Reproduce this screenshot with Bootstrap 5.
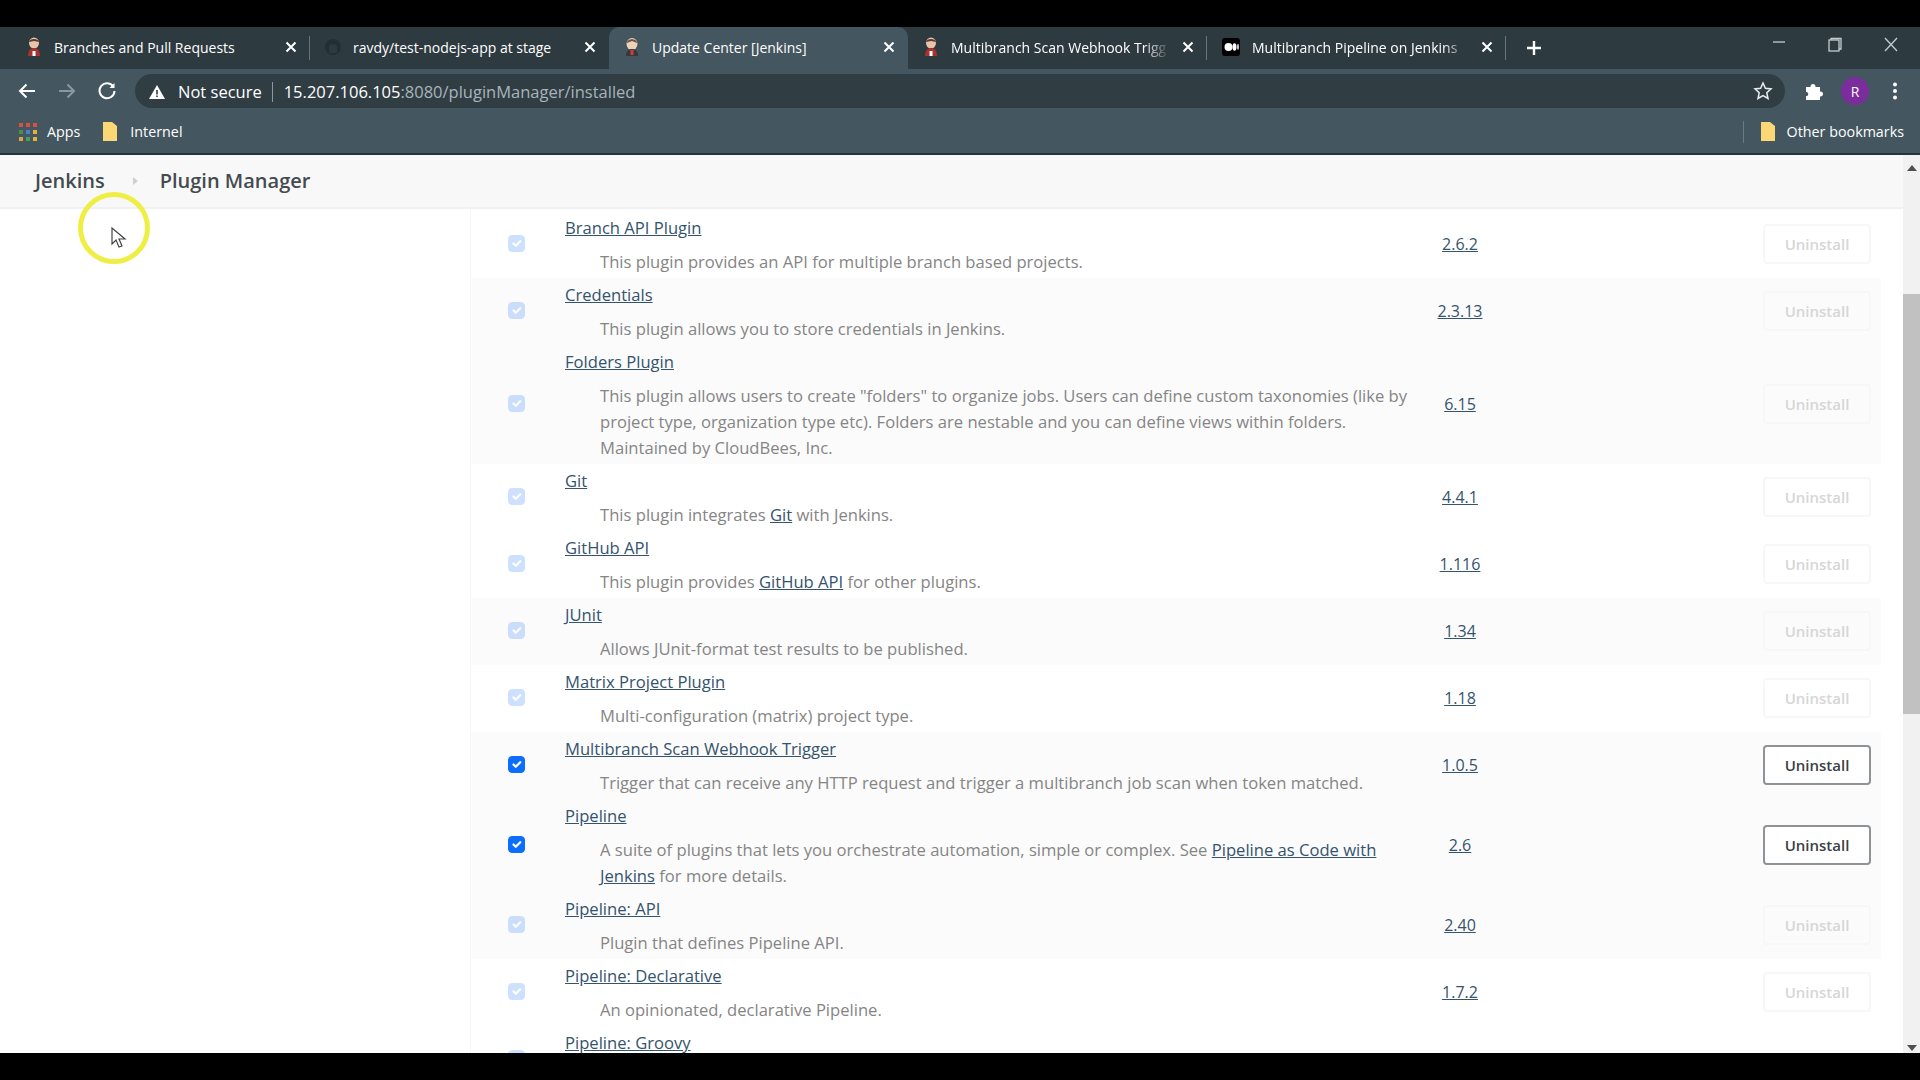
<!DOCTYPE html>
<html lang="en">
<head>
<meta charset="UTF-8">
<title>Update Center [Jenkins]</title>
<link href="https://cdn.jsdelivr.net/npm/bootstrap@5.3.0/dist/css/bootstrap.min.css" rel="stylesheet">
<style>
html, body { height: 100%; overflow: hidden; }
body { background: #000; font-family: "Open Sans", "Liberation Sans", sans-serif; }
.screen { height: 1080px; padding: 27px 0; }

.tabstrip { height: 42px; background: #2d3a40; padding-left: 11px; color: #fff; font-size: 14px; }
.tabitem { width: 299px; height: 42px; padding: 0 13px 2px 15px; position: relative; gap: 12px; white-space: nowrap; }
.tabitem.active-tab { background: #44565f; border-radius: 10px 10px 0 0; }
.tabitem.sep::after { content: ""; position: absolute; right: 0; top: 9px; bottom: 9px; width: 1px; background: #66757c; }
.tabtitle { flex: 1; overflow: hidden; }
.tabtitle.fade-end { -webkit-mask-image: linear-gradient(90deg, #000 88%, transparent); mask-image: linear-gradient(90deg, #000 88%, transparent); }
.tabx { width: 12px; height: 12px; flex: none; }
.newtab { margin-left: 20px; }
.winctl { margin-left: auto; gap: 40px; padding-right: 21px; align-self: flex-start; padding-top: 10px; }

.toolbar { height: 39px; background: #44565f; padding-left: 17px; color: #fff; }
.navico { width: 20px; height: 20px; margin: 12px 20px 0 0; flex: none; }
.omnibox { width: 1650px; height: 34px; margin: 5px 0 0 -2px; border-radius: 17px; background: #303e44; padding: 2px 0 0 14px; font-size: 16.5px; white-space: nowrap; }
.omnibox .urlsep { width: 1px; height: 20px; background: #8c989d; margin: 0 11px 0 10px; }
.notsecure { margin-left: 5px; }
.urldim { color: #a9b3b8; }
.staricon { margin: -2px 12px 0 auto; }
.puzzle { margin: 12px 0 0 19px; }
.avatar-r { width: 28px; height: 28px; margin: 8px 0 0 17px; background: #7b2d9c; font-size: 14px; }
.dotsicon { margin: 12px 0 0 23px; }

.bookmarks { height: 47px; background: #44565f; padding: 2px 0 0 19px; color: #fff; font-size: 14.3px; border-bottom: 2px solid #26343a; }
.bmapps { margin-left: 10px; }
.bmfolder { margin-left: 22px; }
.bmsep { width: 1px; height: 22px; background: #687a83; margin-left: auto; }
.bmfolder-right { margin: 0 13px 0 16px; }
.bmother { margin-left: -2px; padding-right: 16px; }

.pagewrap { height: 898px; background: #fff; }
.pagemain { width: 1903px; }
.crumbbar { height: 54px; background: #f8f8f8; padding-left: 35px; font-size: 20px; font-weight: 600; color: #444b50; border-bottom: 2px solid #f1f1f1; }
.crumbarrow { width: 0; height: 0; border-left: 5px solid #cfcfcf; border-top: 4px solid transparent; border-bottom: 4px solid transparent; margin: 0 22px 0 28px; }
.sidepane { width: 470px; flex: none; }
.plugins { width: 1411px; height: 844px; overflow: hidden; padding-top: 2px; border-left: 1px solid #f6f6f6; }
.plugrow { padding-bottom: 3px; }
.plugrow.shade { background: #fbfbfb; }
.chkcell { width: 94px; flex: none; padding-left: 37px; }
.chkcell .form-check-input { margin: 0; width: 17px; height: 17px; opacity: 1; }
.chkcell .form-check-input:disabled { opacity: .2; }
.maincell { width: 850px; flex: none; padding-top: 4px; font-size: 16.6px; line-height: 26px; }
.maincell a, .vercell a { color: #34536d; }
.plugdesc { margin: 8px 0 0 35px; color: #858585; }
.vercell { width: 90px; flex: none; text-align: center; font-size: 16px; padding-top: 2px; }
.actcell { flex: 1; text-align: right; padding: 2px 10px 0 0; }
.uninstall-btn { width: 108px; height: 40px; padding: 0; font-size: 15px; font-weight: 600; color: #3a4045; border: 2px solid #8f9396; border-radius: 4px; background: #fff; }
.uninstall-btn:disabled { color: #d6d6d6; border-color: #f7f7f7; background: transparent; opacity: 1; }
.plugrow.lastrow { min-height: 67px; }

.fakebar { width: 17px; background: #f1f1f1; }
.fakethumb { height: 420px; background: #c1c1c1; margin-top: 117px; }
.arrowup, .arrowdown { width: 0; height: 0; border-left: 5px solid transparent; border-right: 5px solid transparent; }
.arrowup { border-bottom: 6px solid #505050; margin: 10px auto 6px; }
.arrowdown { border-top: 6px solid #505050; margin: auto auto 2px; }

.cursor-ring { position: absolute; left: 78px; top: 192px; width: 72px; height: 72px; border: 5px solid #eeee44; border-radius: 50%; }
.cursor-ptr { position: absolute; left: 111px; top: 227px; }
</style>
</head>
<body>
<div class="screen position-relative">

  <div class="tabstrip d-flex align-items-center">
    <div class="tabitem sep d-flex align-items-center">
      <svg width="16" height="20" viewBox="0 0 16 20"><ellipse cx="8" cy="6" rx="5" ry="5.5" fill="#e8c4a8"/><path d="M3 5C3 1 13 1 13 5L8 4Z" fill="#5b3a30"/><path d="M2 19c0-6 3-8 6-8s6 2 6 8Z" fill="#a8322e"/><rect x="6.500" y="14" width="3" height="5" fill="#fff"/></svg>
      <span class="tabtitle">Branches and Pull Requests</span>
      <svg class="tabx" viewBox="0 0 12 12"><path d="M1.500 1.500l9 9M10.500 1.500l-9 9" stroke="#fff" stroke-width="2"/></svg>
    </div>
    <div class="tabitem d-flex align-items-center">
      <svg width="16" height="16" viewBox="0 0 16 16"><circle cx="8" cy="8" r="8" fill="#242f34"/><path d="M4 14V8c0-2 1-3 4-3s4 1 4 3v6" fill="#2d3a40"/></svg>
      <span class="tabtitle">ravdy/test-nodejs-app at stage</span>
      <svg class="tabx" viewBox="0 0 12 12"><path d="M1.500 1.500l9 9M10.500 1.500l-9 9" stroke="#fff" stroke-width="2"/></svg>
    </div>
    <div class="tabitem active-tab d-flex align-items-center">
      <svg width="16" height="20" viewBox="0 0 16 20"><ellipse cx="8" cy="7" rx="5.500" ry="6" fill="#eed3b8"/><path d="M3 6C3 1 13 1 13 6L8 4Z" fill="#6b5548"/><path d="M2 19c0-5 3-7 6-7s6 2 6 7Z" fill="#37373c"/><rect x="6.500" y="13" width="3" height="5" fill="#c9423c"/></svg>
      <span class="tabtitle">Update Center [Jenkins]</span>
      <svg class="tabx" viewBox="0 0 12 12"><path d="M1.500 1.500l9 9M10.500 1.500l-9 9" stroke="#fff" stroke-width="2"/></svg>
    </div>
    <div class="tabitem sep d-flex align-items-center">
      <svg width="16" height="20" viewBox="0 0 16 20"><ellipse cx="8" cy="6" rx="5" ry="5.500" fill="#e8c4a8"/><path d="M3 5C3 1 13 1 13 5L8 4Z" fill="#5b3a30"/><path d="M2 19c0-6 3-8 6-8s6 2 6 8Z" fill="#a8322e"/><rect x="6.500" y="14" width="3" height="5" fill="#fff"/></svg>
      <span class="tabtitle fade-end">Multibranch Scan Webhook Trigg</span>
      <svg class="tabx" viewBox="0 0 12 12"><path d="M1.500 1.500l9 9M10.500 1.500l-9 9" stroke="#fff" stroke-width="2"/></svg>
    </div>
    <div class="tabitem sep d-flex align-items-center">
      <svg width="18" height="18" viewBox="0 0 18 18"><rect width="18" height="18" rx="3" fill="#000"/><circle cx="6.500" cy="9" r="4" fill="#fff"/><ellipse cx="12.500" cy="9" rx="2" ry="3.700" fill="#fff"/><ellipse cx="16" cy="9" rx=".8" ry="3.300" fill="#fff"/></svg>
      <span class="tabtitle fade-end">Multibranch Pipeline on Jenkins</span>
      <svg class="tabx" viewBox="0 0 12 12"><path d="M1.500 1.500l9 9M10.500 1.500l-9 9" stroke="#fff" stroke-width="2"/></svg>
    </div>
    <svg class="newtab" width="16" height="16" viewBox="0 0 16 16"><path d="M8 1v14M1 8h14" stroke="#fff" stroke-width="2.400"/></svg>
    <div class="winctl d-flex">
      <svg width="16" height="16" viewBox="0 0 16 16"><path d="M2 5h12" stroke="#c6cdd0" stroke-width="1.300"/></svg>
      <svg width="16" height="16" viewBox="0 0 16 16" fill="none" stroke="#c6cdd0" stroke-width="1.300"><rect x="2" y="3" width="10" height="11"/><path d="M4 3V1.500h10V12h-2"/></svg>
      <svg width="16" height="16" viewBox="0 0 16 16"><path d="M2 1l12 13M14 1L2 14" stroke="#c6cdd0" stroke-width="1.300"/></svg>
    </div>
  </div>

  <div class="toolbar d-flex align-items-start">
    <svg class="navico" viewBox="0 0 20 20" fill="none" stroke="#fff" stroke-width="2"><path d="M18 10H3M9.500 3.500L3 10l6.500 6.500"/></svg>
    <svg class="navico" viewBox="0 0 20 20" fill="none" stroke="#8b989e" stroke-width="2"><path d="M2 10h15M10.500 3.500L17 10l-6.500 6.500"/></svg>
    <svg class="navico" viewBox="0 0 20 20" fill="none" stroke="#fff" stroke-width="2"><path d="M16.500 6A7.500 7.500 0 1 0 17.500 10"/><path d="M17.500 2v5h-5" fill="#fff" stroke="none"/></svg>
    <div class="omnibox d-flex align-items-center">
      <svg width="16" height="14" viewBox="0 0 16 14" class="me-2"><path d="M8 0l8 14H0Z" fill="#fff"/><rect x="7.200" y="5" width="1.600" height="4.500" fill="#303e44"/><rect x="7.200" y="10.500" width="1.600" height="1.600" fill="#303e44"/></svg>
      <span class="notsecure">Not secure</span><span class="urlsep"></span>
      <span>15.207.106.105<span class="urldim">:8080/pluginManager/installed</span></span>
      <svg class="staricon" width="20" height="20" viewBox="0 0 20 20" fill="none" stroke="#e8ecee" stroke-width="1.500"><path d="M10 2l2.400 5.300 5.600.6-4.200 3.800 1.200 5.800L10 14.600 5 17.500l1.200-5.800L2 7.900l5.600-.6Z"/></svg>
    </div>
    <svg class="puzzle" width="20" height="20" viewBox="0 0 20 20"><path d="M2 6h4.500c-.5-4 5.500-4 5 0H16v4.500c4-.5 4 5.500 0 5V19H2v-4c3 .5 3-4.500 0-4Z" fill="#fff"/></svg>
    <div class="avatar-r d-flex align-items-center justify-content-center rounded-circle">R</div>
    <svg class="dotsicon" width="6" height="20" viewBox="0 0 6 20" fill="#fff"><circle cx="3" cy="3.500" r="2"/><circle cx="3" cy="10" r="2"/><circle cx="3" cy="16.500" r="2"/></svg>
  </div>

  <div class="bookmarks d-flex align-items-center">
    <svg width="18" height="18" viewBox="0 0 18 18">
      <rect width="4" height="4" fill="#d9503f"/><rect x="7" width="4" height="4" fill="#d9503f"/><rect x="14" width="4" height="4" fill="#d9503f"/>
      <rect y="7" width="4" height="4" fill="#4a8f4c"/><rect x="7" y="7" width="4" height="4" fill="#4a7fd0"/><rect x="14" y="7" width="4" height="4" fill="#e3b23c"/>
      <rect y="14" width="4" height="4" fill="#e3a23c"/><rect x="7" y="14" width="4" height="4" fill="#4a9f5c"/><rect x="14" y="14" width="4" height="4" fill="#e3b23c"/>
    </svg>
    <span class="bmapps">Apps</span>
    <svg class="bmfolder" width="16" height="19" viewBox="0 0 16 19"><path d="M1 0h9l5 4v15H1Z" fill="#fbd775"/></svg>
    <span class="ms-2 ps-1">Internel</span>
    <span class="bmsep"></span>
    <svg class="bmfolder-right" width="16" height="19" viewBox="0 0 16 19"><path d="M1 0h9l5 4v15H1Z" fill="#fbd775"/></svg>
    <span class="bmother">Other bookmarks</span>
  </div>

  <div class="pagewrap d-flex">
    <div class="pagemain">
      <div class="crumbbar d-flex align-items-center">
        <span>Jenkins</span><span class="crumbarrow"></span><span>Plugin Manager</span>
      </div>
      <div class="d-flex">
        <div class="sidepane"></div>
        <div class="plugins">

          <div class="plugrow d-flex">
            <div class="chkcell d-flex align-items-center"><input class="form-check-input" type="checkbox" checked disabled></div>
            <div class="maincell"><a href="#">Branch API Plugin</a><div class="plugdesc">This plugin provides an API for multiple branch based projects.</div></div>
            <div class="vercell d-flex align-items-center justify-content-center"><a href="#">2.6.2</a></div>
            <div class="actcell d-flex align-items-center justify-content-end"><button class="btn uninstall-btn" disabled>Uninstall</button></div>
          </div>

          <div class="plugrow shade d-flex">
            <div class="chkcell d-flex align-items-center"><input class="form-check-input" type="checkbox" checked disabled></div>
            <div class="maincell"><a href="#">Credentials</a><div class="plugdesc">This plugin allows you to store credentials in Jenkins.</div></div>
            <div class="vercell d-flex align-items-center justify-content-center"><a href="#">2.3.13</a></div>
            <div class="actcell d-flex align-items-center justify-content-end"><button class="btn uninstall-btn" disabled>Uninstall</button></div>
          </div>

          <div class="plugrow shade d-flex">
            <div class="chkcell d-flex align-items-center"><input class="form-check-input" type="checkbox" checked disabled></div>
            <div class="maincell"><a href="#">Folders Plugin</a><div class="plugdesc">This plugin allows users to create "folders" to organize jobs. Users can define custom taxonomies (like by project type, organization type etc). Folders are nestable and you can define views within folders. Maintained by CloudBees, Inc.</div></div>
            <div class="vercell d-flex align-items-center justify-content-center"><a href="#">6.15</a></div>
            <div class="actcell d-flex align-items-center justify-content-end"><button class="btn uninstall-btn" disabled>Uninstall</button></div>
          </div>

          <div class="plugrow d-flex">
            <div class="chkcell d-flex align-items-center"><input class="form-check-input" type="checkbox" checked disabled></div>
            <div class="maincell"><a href="#">Git</a><div class="plugdesc">This plugin integrates <a href="#">Git</a> with Jenkins.</div></div>
            <div class="vercell d-flex align-items-center justify-content-center"><a href="#">4.4.1</a></div>
            <div class="actcell d-flex align-items-center justify-content-end"><button class="btn uninstall-btn" disabled>Uninstall</button></div>
          </div>

          <div class="plugrow d-flex">
            <div class="chkcell d-flex align-items-center"><input class="form-check-input" type="checkbox" checked disabled></div>
            <div class="maincell"><a href="#">GitHub API</a><div class="plugdesc">This plugin provides <a href="#">GitHub API</a> for other plugins.</div></div>
            <div class="vercell d-flex align-items-center justify-content-center"><a href="#">1.116</a></div>
            <div class="actcell d-flex align-items-center justify-content-end"><button class="btn uninstall-btn" disabled>Uninstall</button></div>
          </div>

          <div class="plugrow shade d-flex">
            <div class="chkcell d-flex align-items-center"><input class="form-check-input" type="checkbox" checked disabled></div>
            <div class="maincell"><a href="#">JUnit</a><div class="plugdesc">Allows JUnit-format test results to be published.</div></div>
            <div class="vercell d-flex align-items-center justify-content-center"><a href="#">1.34</a></div>
            <div class="actcell d-flex align-items-center justify-content-end"><button class="btn uninstall-btn" disabled>Uninstall</button></div>
          </div>

          <div class="plugrow d-flex">
            <div class="chkcell d-flex align-items-center"><input class="form-check-input" type="checkbox" checked disabled></div>
            <div class="maincell"><a href="#">Matrix Project Plugin</a><div class="plugdesc">Multi-configuration (matrix) project type.</div></div>
            <div class="vercell d-flex align-items-center justify-content-center"><a href="#">1.18</a></div>
            <div class="actcell d-flex align-items-center justify-content-end"><button class="btn uninstall-btn" disabled>Uninstall</button></div>
          </div>

          <div class="plugrow shade d-flex">
            <div class="chkcell d-flex align-items-center"><input class="form-check-input" type="checkbox" checked></div>
            <div class="maincell"><a href="#">Multibranch Scan Webhook Trigger</a><div class="plugdesc">Trigger that can receive any HTTP request and trigger a multibranch job scan when token matched.</div></div>
            <div class="vercell d-flex align-items-center justify-content-center"><a href="#">1.0.5</a></div>
            <div class="actcell d-flex align-items-center justify-content-end"><button class="btn uninstall-btn">Uninstall</button></div>
          </div>

          <div class="plugrow shade d-flex">
            <div class="chkcell d-flex align-items-center"><input class="form-check-input" type="checkbox" checked></div>
            <div class="maincell"><a href="#">Pipeline</a><div class="plugdesc">A suite of plugins that lets you orchestrate automation, simple or complex. See <a href="#">Pipeline as Code with Jenkins</a> for more details.</div></div>
            <div class="vercell d-flex align-items-center justify-content-center"><a href="#">2.6</a></div>
            <div class="actcell d-flex align-items-center justify-content-end"><button class="btn uninstall-btn">Uninstall</button></div>
          </div>

          <div class="plugrow shade d-flex">
            <div class="chkcell d-flex align-items-center"><input class="form-check-input" type="checkbox" checked disabled></div>
            <div class="maincell"><a href="#">Pipeline: API</a><div class="plugdesc">Plugin that defines Pipeline API.</div></div>
            <div class="vercell d-flex align-items-center justify-content-center"><a href="#">2.40</a></div>
            <div class="actcell d-flex align-items-center justify-content-end"><button class="btn uninstall-btn" disabled>Uninstall</button></div>
          </div>

          <div class="plugrow d-flex">
            <div class="chkcell d-flex align-items-center"><input class="form-check-input" type="checkbox" checked disabled></div>
            <div class="maincell"><a href="#">Pipeline: Declarative</a><div class="plugdesc">An opinionated, declarative Pipeline.</div></div>
            <div class="vercell d-flex align-items-center justify-content-center"><a href="#">1.7.2</a></div>
            <div class="actcell d-flex align-items-center justify-content-end"><button class="btn uninstall-btn" disabled>Uninstall</button></div>
          </div>

          <div class="plugrow lastrow d-flex">
            <div class="chkcell d-flex align-items-center"><input class="form-check-input" type="checkbox" checked disabled></div>
            <div class="maincell"><a href="#">Pipeline: Groovy</a></div>
          </div>

        </div>
      </div>
    </div>
    <div class="fakebar d-flex flex-column">
      <div class="arrowup"></div>
      <div class="fakethumb"></div>
      <div class="arrowdown"></div>
    </div>
  </div>

  <div class="cursor-ring"></div>
  <svg class="cursor-ptr" width="16" height="22" viewBox="0 0 16 22"><path d="M1 1v16l4-4 3 7 3-1-3-7h6Z" fill="#fff" stroke="#444" stroke-width="1.200"/></svg>
</div>
</body>
</html>
